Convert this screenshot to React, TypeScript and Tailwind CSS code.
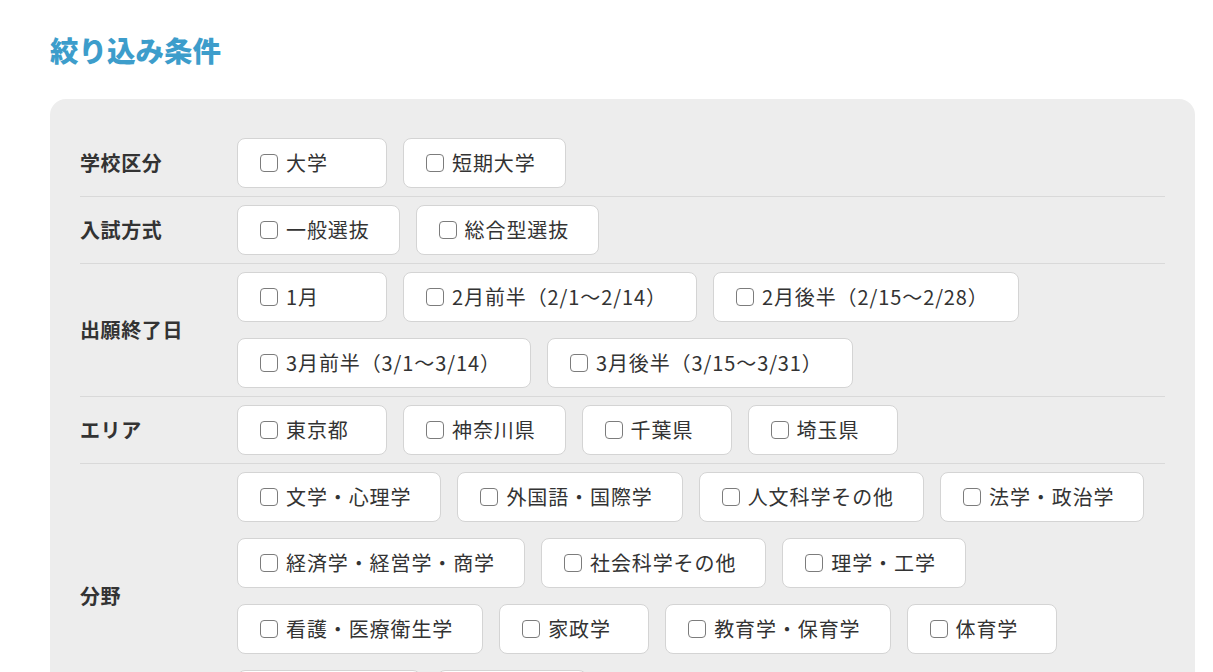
const sections: { label: string; items: string[] }[] = [
  { label: "学校区分", items: ["大学", "短期大学"] },
  { label: "入試方式", items: ["一般選抜", "総合型選抜"] },
  {
    label: "出願終了日",
    items: ["1月", "2月前半（2/1〜2/14）", "2月後半（2/15〜2/28）", "3月前半（3/1〜3/14）", "3月後半（3/15〜3/31）"],
  },
  { label: "エリア", items: ["東京都", "神奈川県", "千葉県", "埼玉県"] },
  {
    label: "分野",
    items: [
      "文学・心理学",
      "外国語・国際学",
      "人文科学その他",
      "法学・政治学",
      "経済学・経営学・商学",
      "社会科学その他",
      "理学・工学",
      "看護・医療衛生学",
      "家政学",
      "教育学・保育学",
      "体育学",
      "総合・学際",
      "芸術学",
    ],
  },
];

function Option({ text }: { text: string }) {
  return (
    <label className="flex h-[50px] min-w-[150px] cursor-pointer items-center rounded-[8px] border border-[#d4d4d4] bg-white pl-[22px] pr-[29px]">
      <span className="mr-[8px] block h-[18px] w-[18px] shrink-0 rounded-[4px] border-[1.5px] border-[#7c7c7c] bg-white" />
      <span className="whitespace-nowrap text-[20px] tracking-[0.045em] text-[#333]">{text}</span>
    </label>
  );
}

export default function App() {
  return (
    <div
      className="min-h-screen bg-white pl-[50px] pr-[18px]"
      style={{ fontFamily: '"Noto Sans CJK JP", "Noto Sans", sans-serif' }}
    >
      <h1 className="pt-[29px] text-[28.5px] font-black leading-[42px] text-[#3d9dcb]">絞り込み条件</h1>
      <div className="mt-[28px] rounded-[16px] bg-[#ededed] px-[30px] pb-[30px] pt-[31px]">
        {sections.map((s) => (
          <div key={s.label} className="flex border-b border-[#d9d9d9] py-2">
            <div className="flex w-[157px] shrink-0 items-center text-[20px] font-bold tracking-[0.03em] text-[#333]">
              {s.label}
            </div>
            <div className="flex flex-1 flex-wrap gap-4">
              {s.items.map((it) => (
                <Option key={it} text={it} />
              ))}
            </div>
          </div>
        ))}
      </div>
    </div>
  );
}
